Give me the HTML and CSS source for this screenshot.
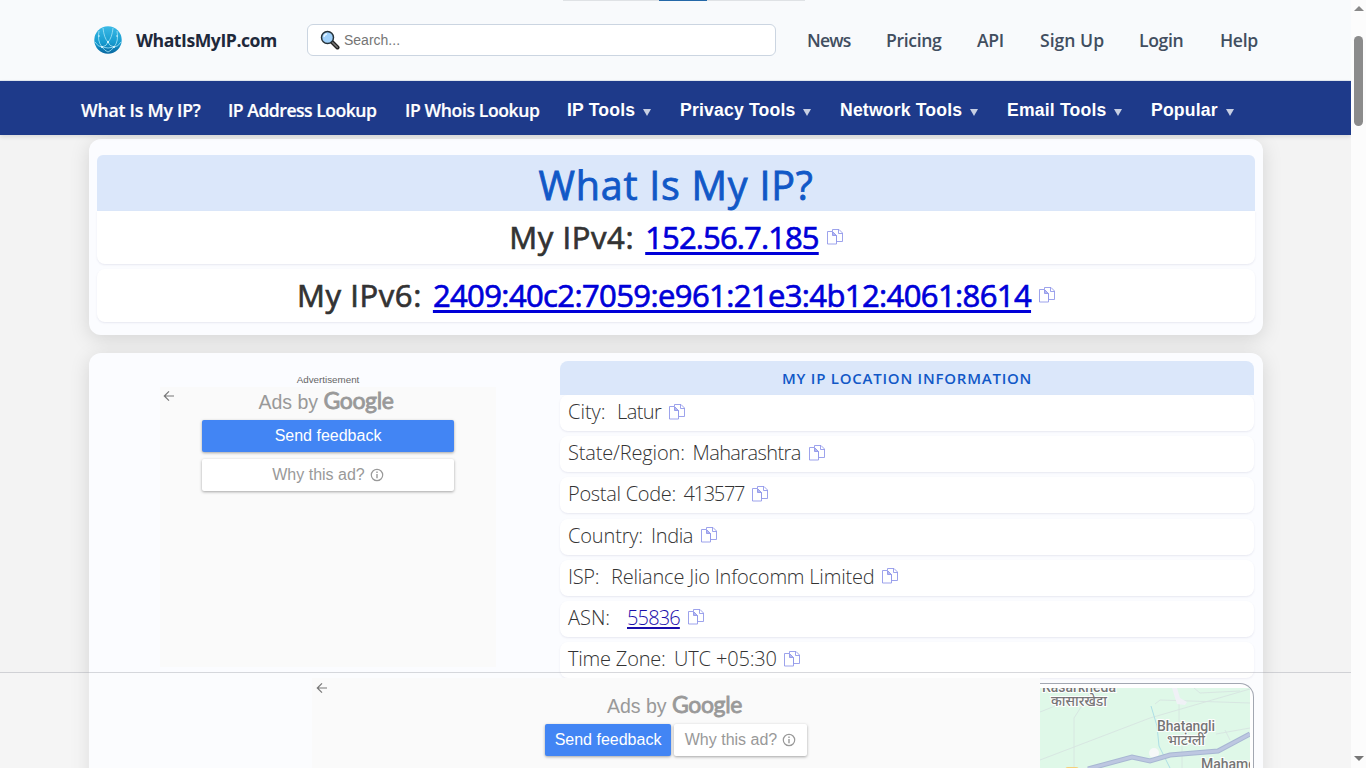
FILE: index.html
```html
<!DOCTYPE html>
<html lang="en">
<head>
<meta charset="utf-8">
<title>What Is My IP?</title>
<link rel="stylesheet" href="styles.css">
</head>
<body>
<svg class="defs" aria-hidden="true">
  <symbol id="copy" viewBox="0 0 16 16"><path d="M5.500 2.500H.5v12.500h9v-8.500M5.500 .5v2M5.500 .5h6.500l3.500 3.500v8.500h-6M11.500 .5v4h4M5.500 2.500l4 4M5.500 3v3.500h4M9.500 6.500v6" fill="none" stroke="currentColor" stroke-width=".9"/><path d="M5.500 2.500l4 4h-4z" fill="currentColor" fill-opacity=".7"/></symbol>
  <symbol id="back" viewBox="0 0 12 12"><path d="M11 6H1.500M6 1.300L1.300 6L6 10.700" fill="none" stroke="currentColor" stroke-width="1.200"/></symbol>
  <symbol id="info" viewBox="0 0 14 14"><circle cx="7" cy="7" r="5.700" fill="none" stroke="currentColor" stroke-width="1.200"/><path d="M7 6v4.300M7 3.500v1.500" stroke="currentColor" stroke-width="1.400"/></symbol>
</svg>
<div class="page">
  <header class="header">
    <div class="ad-edge"></div>
    <svg class="logo" viewBox="0 0 28 28"><defs><linearGradient id="g" x1="0" y1="0" x2="0" y2="1"><stop offset="0" stop-color="#3ab9e6"/><stop offset=".6" stop-color="#169bcf"/><stop offset="1" stop-color="#08669f"/></linearGradient></defs><circle cx="14" cy="14" r="13.700" fill="url(#g)"/><path d="M9 2Q10 12 14 16Q18 12 19 2M5 5Q3 15 8 21Q13 20 14 16Q15 20 20 21Q25 15 23 5M1 16Q4 21 8 21Q11 25 14 26Q17 25 20 21Q24 21 27 16M8 21Q14 23 20 21" fill="none" stroke="#a5e3f6" stroke-width=".8"/><g fill="#e6faff"><circle cx="14" cy="16" r="1"/><circle cx="8" cy="21" r="1"/><circle cx="20" cy="21" r="1"/><circle cx="5" cy="10" r=".8"/><circle cx="23" cy="10" r=".8"/></g></svg>
    <b class="brand">WhatIsMyIP.com</b>
    <div class="search"><svg class="lens" viewBox="0 0 20 20"><path d="M11.500 11.500L17.500 17.500" stroke="#222" stroke-width="4" stroke-linecap="round"/><path d="M12.500 12.500L17.300 17.300" stroke="#777" stroke-width="1.500" stroke-linecap="round"/><circle cx="7.500" cy="7.500" r="6" fill="#9fd0fa" stroke="#263238" stroke-width="1.500"/><path d="M4 7Q4.500 4.200 7 4" fill="none" stroke="#e5f5ff" stroke-width="1.300"/></svg><span>Search...</span></div>
    <nav class="links"><a class="w1">News</a><a class="w2">Pricing</a><a class="w3">API</a><a class="w4">Sign Up</a><a class="w5">Login</a><a class="w6">Help</a></nav>
  </header>
  <nav class="bar"><a class="n1">What Is My IP?</a><a class="n2">IP Address Lookup</a><a class="n3">IP Whois Lookup</a><a class="n4 drop">IP Tools<i></i></a><a class="n5 drop">Privacy Tools<i></i></a><a class="n6 drop">Network Tools<i></i></a><a class="n7 drop">Email Tools<i></i></a><a class="n8 drop">Popular<i></i></a></nav>
  <main class="main">
    <section class="card hero">
      <h1>What Is My IP?</h1>
      <div class="ip"><span>My IPv4:</span><a class="v4">152.56.7.185</a><svg class="copy"><use href="#copy"/></svg></div>
      <div class="ip"><span>My IPv6:</span><a class="v6">2409:40c2:7059:e961:21e3:4b12:4061:8614</a><svg class="copy"><use href="#copy"/></svg></div>
    </section>
    <section class="card details">
      <aside class="side">
        <div class="ad-label">Advertisement</div>
        <div class="ad">
          <svg class="back"><use href="#back"/></svg>
          <div class="ads-by">Ads by <b>Google</b></div>
          <div class="btn primary">Send feedback</div>
          <div class="btn">Why this ad? <svg class="info"><use href="#info"/></svg></div>
        </div>
      </aside>
      <div class="info-list">
        <h2>MY IP LOCATION INFORMATION</h2>
        <div class="row city"><span>City:</span><b>Latur</b><svg class="copy"><use href="#copy"/></svg></div>
        <div class="row state"><span>State/Region:</span><b>Maharashtra</b><svg class="copy"><use href="#copy"/></svg></div>
        <div class="row postal"><span>Postal Code:</span><b>413577</b><svg class="copy"><use href="#copy"/></svg></div>
        <div class="row country"><span>Country:</span><b>India</b><svg class="copy"><use href="#copy"/></svg></div>
        <div class="row isp"><span>ISP:</span><b>Reliance Jio Infocomm Limited</b><svg class="copy"><use href="#copy"/></svg></div>
        <div class="row asn"><span>ASN:</span><b>55836</b><svg class="copy"><use href="#copy"/></svg></div>
        <div class="row zone"><span>Time Zone:</span><b>UTC +05:30</b><svg class="copy"><use href="#copy"/></svg></div>
        <div class="map">
          <svg viewBox="0 0 210 80" width="210" height="80">
            <rect width="210" height="80" fill="#d6f7e2"/>
            <g fill="none" stroke="#cbdcd8" stroke-width=".9"><path d="M0 72L110 30L210 1M34 80V30L50 5M142 80V58M139 16V34M0 24L20 16M115 16L120 12L210 15M154 0L160 5L200 3M176 46L210 40M185 42L190 52"/></g>
            <path d="M132 0h5l3 10l7 4l-2 3l-8-1z" fill="#eceef5"/>
            <path d="M111 18L117 38L119 58L130 80" fill="none" stroke="#93d5de"/>
            <circle cx="114" cy="65" r="5" fill="#f4f7f7"/>
            <path d="M48 81L92 69L110 73L130 67L178 63L210 46" fill="none" stroke="#8da0c6" stroke-width="5"/><path d="M48 81L92 69L110 73L130 67L178 63L210 46" fill="none" stroke="#a8b6d8" stroke-width="3"/>
            <rect x="25" y="79" width="14" height="8" rx="3" fill="#f2c14e"/>
            <g class="place"><text x="2" y="4" textLength="74">Kasarkheda</text><text x="11" y="18" textLength="56" lengthAdjust="spacingAndGlyphs">कासारखेडा</text><text x="117" y="43" textLength="58">Bhatangli</text><text x="127" y="57" textLength="38" lengthAdjust="spacingAndGlyphs">भाटंग्ली</text><text x="161" y="81">Mahamd</text></g>
          </svg>
        </div>
      </div>
    </section>
  </main>
</div>
<div class="scroll"><span class="up"></span><span class="thumb"></span><span class="down"></span></div>
<div class="anchor">
  <div class="anchor-ad">
    <svg class="back"><use href="#back"/></svg>
    <div class="ads-by">Ads by <b>Google</b></div>
    <div class="btns"><div class="btn primary">Send feedback</div><div class="btn why">Why this ad? <svg class="info"><use href="#info"/></svg></div></div>
  </div>
</div>
</body>
</html>
```
FILE: styles.css
```css
*{box-sizing:border-box}
body{margin:0;width:1366px;height:768px;overflow:hidden;display:flex;position:relative;background:#f3f3f3;font-family:"Open Sans","Noto Sans",sans-serif;color:#333;white-space:nowrap}
.defs{position:absolute;width:0;height:0}
.page{width:1351px;height:768px;overflow:hidden}
.header{position:relative;height:81px;background:#f8fafc;border-bottom:1px solid #e2e8f0;display:flex;align-items:center;padding-left:94px}
.ad-edge{position:absolute;left:563px;top:0;width:242px;height:1px;background:linear-gradient(90deg,#dfe2e5 96px,#2468a8 96px,#2468a8 144px,#dfe2e5 144px)}
.logo{width:28px;height:28px}
.brand{width:171px;margin-left:14px;font-size:17.600px;letter-spacing:-.45px;color:#1e293b}
.search{width:469px;height:32px;background:#fff;border:1px solid #cbd5e1;border-radius:6px;display:flex;align-items:center;padding-left:12px;font:14px "Liberation Sans",sans-serif;color:#757575}
.lens{width:20px;height:20px;margin-right:4px}
.links{display:flex;margin-left:31px;font-size:17.600px;font-weight:600;letter-spacing:-.35px;color:#414e60}
.w1{width:79px;letter-spacing:-.8px}.w2{width:91px}.w3{width:63px}.w4{width:99px;letter-spacing:0}.w5{width:81px}
.bar{position:relative;z-index:1;height:54px;background:#1e3a8a;box-shadow:0 2px 4px rgba(0,0,0,.1);display:flex;align-items:center;padding:3px 0 0 81px;color:#fff;font-size:17.600px;font-weight:600;-webkit-text-stroke:.2px}
.n1{width:147px;letter-spacing:-.2px}.n2{width:177px;letter-spacing:-.5px}.n3{width:162px;letter-spacing:-.4px}.n4{width:113px}.n5{width:160px}.n6{width:167px}.n7{width:144px}
.drop{font:bold 17.600px "Liberation Sans",sans-serif;letter-spacing:.18px;padding-top:2px;-webkit-text-stroke:0}
.drop i{display:inline-block;border:4px solid transparent;border-top:7px solid #c7cfe3;border-bottom:0;margin-left:8px}
.main{padding:4px 88px 0 89px}
.card{background:#fbfcff;border-radius:12px;box-shadow:0 4px 20px rgba(0,0,0,.13)}
.hero{height:196px;padding:16px 8px}
.hero h1{margin:0;height:56px;line-height:60px;background:#dbe7fa;border-radius:6px 6px 0 0;text-align:center;font-size:39.500px;font-weight:400;letter-spacing:.75px;color:#1158c7;-webkit-text-stroke:.8px #1158c7}
.ip{height:53px;display:flex;justify-content:center;align-items:center;background:#fff;border-radius:0 0 8px 8px;box-shadow:0 1px 2px rgba(60,60,120,.1);font-size:31px;letter-spacing:.6px;margin-bottom:5px;-webkit-text-stroke:.7px;line-height:50px}
.ip+.ip{border-radius:8px}
.ip span,.ip a{position:relative;top:-1px}
.ip a{color:#0000d8;text-decoration:underline;text-decoration-thickness:3px;text-underline-offset:3px;margin-left:11px}
.ip .v4{letter-spacing:-.87px}
.ip .v6{letter-spacing:-.61px}
.copy{width:16px;height:16px;color:#9299ea;margin-left:8px;-webkit-text-stroke:0}
.ip .copy{position:relative;top:-1px}
.details{height:600px;margin-top:18px;display:flex}
.side{width:471px;padding:20px 0 0 71px;font-family:"Liberation Sans",sans-serif}
.ad-label{width:336px;height:14px;line-height:13px;text-align:center;font-size:9.800px;color:#666}
.ad{position:relative;width:336px;height:280px;background:#fafafa;padding:0 42px}
.back{position:absolute;left:3px;top:3px;width:12px;height:12px;color:#777}
.ads-by{font:19.500px/31px "Liberation Sans",sans-serif;height:33px;text-align:center;color:#999;padding-right:4px}
.ads-by b{font:400 23px/24px Lato,sans-serif;letter-spacing:-.35px;-webkit-text-stroke:.8px}
.btn{width:252px;height:32px;background:#fff;border-radius:2px;box-shadow:0 1px 3px rgba(0,0,0,.35);font:16px/32px "Liberation Sans",sans-serif;color:#999;display:flex;justify-content:center;align-items:center;gap:5px;margin-bottom:7px}
.primary{background:#4285f4;color:#fff}
.info{width:14px;height:14px}
.info-list{width:694px;padding-top:8px}
.info-list h2{margin:0;height:34px;line-height:34px;text-align:center;background:#dbe7fa;border-radius:8px 8px 0 0;font-size:15px;font-weight:600;letter-spacing:.77px;color:#1158c7}
.row{height:36px;margin-bottom:5.200px;background:#fff;border-radius:8px;box-shadow:0 1px 2px rgba(60,60,120,.1);padding:0 0 3px 8px;display:flex;align-items:center;font-size:20px;font-weight:300}
.row b{font-weight:300}
.city span{width:49px}.city b{width:44px;letter-spacing:-.6px}
.state span{width:124.500px;letter-spacing:-.15px}.state b{width:108px;letter-spacing:-.6px}
.postal span{width:115.500px;letter-spacing:-.3px}.postal b{width:60px;letter-spacing:-1.300px}
.country span{width:83px;letter-spacing:-.15px}.country b{width:42px;letter-spacing:-.35px}
.isp span{width:43px;letter-spacing:-.3px}.isp b{width:263px;letter-spacing:-.2px}
.asn span{width:59px}.asn b{width:53px;letter-spacing:-.85px;color:#1a0dab;text-decoration:underline;text-decoration-thickness:2px;text-underline-offset:2px}
.zone span{width:106px;letter-spacing:-.2px}.zone b{width:102px;letter-spacing:-.15px}
.map{height:90px;border:1px solid #858b99;border-bottom:0;border-radius:14px 14px 0 0;padding:4px 3px;display:flex;justify-content:flex-end;background:#fff;overflow:hidden}
.place{font:500 14px Roboto,"Noto Sans Devanagari",sans-serif;fill:#4a4a4a;stroke:#fff;stroke-width:2px;paint-order:stroke}
.scroll{width:15px;height:768px;background:#fcfcfc;display:flex;flex-direction:column;align-items:center}
.up{margin-top:6px;border:5px solid transparent;border-top:0;border-bottom:5px solid #888}
.thumb{width:9px;height:90px;margin-top:25px;border-radius:5px;background:#8b8b8b}
.down{margin:630px 0 0;border:5px solid transparent;border-bottom:0;border-top:5px solid #777}
.anchor{position:absolute;left:0;bottom:0;width:1351px;height:96px;border-top:1px solid rgba(100,105,120,.25);background:rgba(250,250,252,.25);padding:5px 0 0 312px}
.anchor-ad{position:relative;width:728px;height:90px;background:#fafafa}
.anchor .back{left:4px;top:4px}
.anchor .ads-by{height:46px;line-height:57px;padding-right:3px}
.btns{display:flex;justify-content:center;gap:3px}
.anchor .btn{width:126px}
.anchor .why{width:133px}
```
